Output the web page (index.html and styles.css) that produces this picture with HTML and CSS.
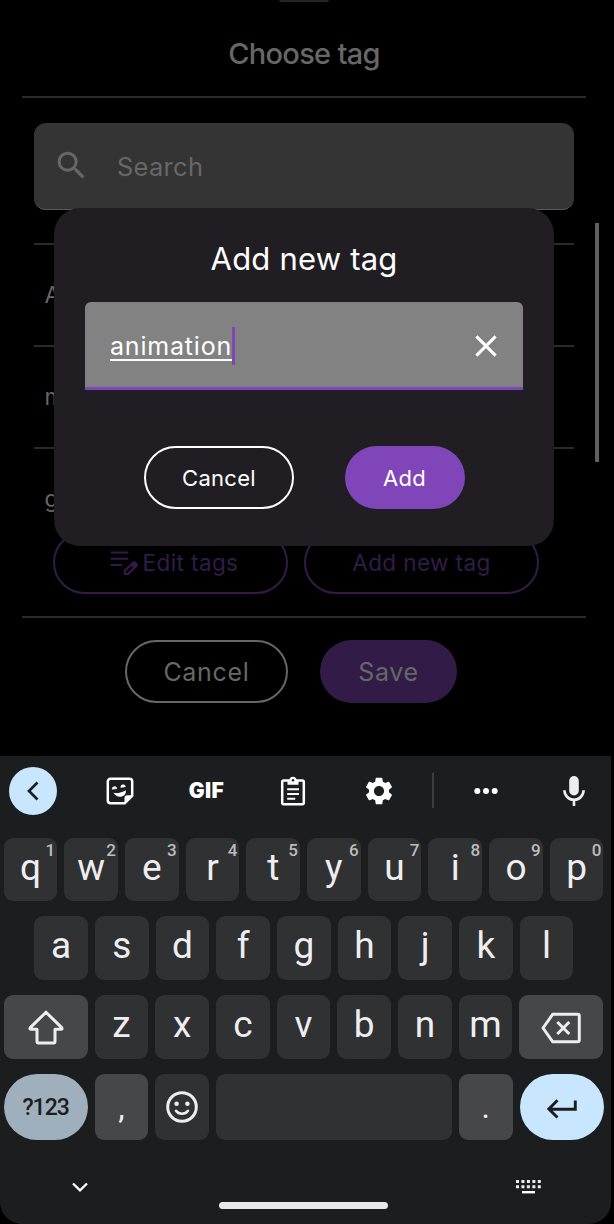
FILE: index.html
```html
<!DOCTYPE html>
<html lang="en">
<head>
<meta charset="utf-8">
<title>Choose tag</title>
<link rel="stylesheet" href="styles.css">
</head>
<body>
<div class="screen">
  <main class="sheet">
    <div class="handle"></div>
    <h1 class="sheet-title">Choose tag</h1>
    <div class="rule"></div>
    <div class="search">
      <svg class="search-icon" viewBox="0 0 24 24"><path fill="currentColor" d="M15.5 14h-.79l-.28-.27A6.47 6.47 0 0 0 16 9.5 6.5 6.5 0 1 0 9.5 16c1.61 0 3.09-.59 4.23-1.57l.27.28v.79l5 4.99L20.49 19l-4.99-5zm-6 0C7.01 14 5 11.99 5 9.5S7.01 5 9.5 5 14 7.01 14 9.5 11.99 14 9.5 14z"/></svg>
      <span class="search-text">Search</span>
    </div>
    <div class="list">
      <div class="row">A</div>
      <div class="row">m</div>
      <div class="row">g</div>
      <div class="scrollbar"></div>
    </div>
    <div class="tag-actions">
      <button class="pill tag-btn edit-btn"><svg class="edit-icon" viewBox="0 0 28 26" fill="none" stroke="currentColor" stroke-width="2.1" stroke-linecap="round"><path d="M1.5 2.5h16M1.5 8.7h16M1.5 15h10"/><path stroke-linejoin="round" d="M14.8 24v-3.2l8.3-8a1.6 1.6 0 0 1 2.2 0l1 1a1.6 1.6 0 0 1 0 2.2l-8.300 8z"/><path fill="currentColor" stroke="none" d="M20.700 15.200l3-3 3.600 3.600-3 3z"/></svg><span>Edit tags</span></button>
      <button class="pill tag-btn"><span>Add new tag</span></button>
    </div>
    <div class="rule"></div>
    <div class="sheet-actions">
      <button class="pill sheet-cancel">Cancel</button>
      <button class="pill sheet-save">Save</button>
    </div>
  </main>

  <section class="dialog">
    <h2 class="dialog-title">Add new tag</h2>
    <div class="field">
      <span class="field-text">animation</span><span class="caret"></span>
      <svg class="clear" viewBox="0 0 22 22"><path d="M1.400 1.400l19.200 19.200M20.600 1.400L1.400 20.600" stroke="#fff" stroke-width="3"/></svg>
    </div>
    <div class="dialog-actions">
      <button class="pill dialog-cancel">Cancel</button>
      <button class="pill dialog-add">Add</button>
    </div>
  </section>

  <section class="keyboard">
    <div class="toolbar">
      <div class="tool back"><svg width="12" height="20" viewBox="0 0 12 20"><path d="M10.500 1.500L2 10l8.500 8.500" fill="none" stroke="#1b1d1f" stroke-width="2.700"/></svg></div>
      <div class="tool t-sticker"><svg width="28" height="28" viewBox="0 0 28 28"><path d="M4.500 1.800h19a2.700 2.700 0 0 1 2.700 2.700v14.300l-7.400 7.400H4.500a2.700 2.700 0 0 1-2.700-2.700v-19a2.700 2.700 0 0 1 2.700-2.700z" fill="none" stroke="#fff" stroke-width="2.500"/><path d="M26.500 18.300h-5a3 3 0 0 0-3 3v5.200z" fill="#fff"/><path d="M7.300 15.800c4.500.8 8.600-.4 12.500-2.600.6 3.600-1.700 6.200-5 6.500-3.300.3-6-1.300-7.500-3.900z" fill="#fff"/><path d="M6.200 12.300a2.300 2.300 0 0 1 4.600-.7zM14.800 10.400a2.300 2.300 0 0 1 4.600-.7z" fill="#fff" stroke="#fff" stroke-width=".6"/></svg></div>
      <div class="tool t-gif">GIF</div>
      <div class="tool t-clip"><svg width="26" height="30" viewBox="0 0 26 30"><rect x="2.200" y="4.500" width="21.600" height="23.700" rx="1.500" fill="none" stroke="#fff" stroke-width="2.500"/><path d="M7.500 4.500h2A3.600 3.600 0 0 1 13 .8a3.600 3.600 0 0 1 3.500 3.700h2v4.300h-11z" fill="#fff"/><circle cx="13" cy="4.300" r="1.200" fill="#1b1d1f"/><path d="M7.200 13.200h11.800M7.200 18h11.800M7.200 22.800h8" stroke="#fff" stroke-width="2"/></svg></div>
      <div class="tool t-gear"><svg width="32" height="32" viewBox="0 0 24 24"><path fill="#fff" d="M19.430 12.980c.040-.320.070-.640.070-.980s-.030-.660-.070-.980l2.110-1.650c.190-.150.240-.420.120-.640l-2-3.460c-.120-.220-.390-.300-.610-.220l-2.490 1c-.520-.400-1.080-.730-1.690-.980l-.380-2.650A.488.488 0 0 0 14 2h-4c-.250 0-.460.180-.490.420l-.380 2.650c-.610.250-1.170.590-1.690.980l-2.490-1c-.230-.090-.490 0-.610.220l-2 3.460c-.130.220-.070.490.120.640l2.110 1.650c-.040.320-.070.650-.070.980s.030.660.070.980l-2.110 1.650c-.190.150-.240.420-.120.640l2 3.460c.120.220.390.300.610.220l2.490-1c.520.400 1.080.730 1.690.980l.380 2.650c.030.240.240.420.490.420h4c.250 0 .460-.180.490-.420l.380-2.650c.610-.250 1.170-.590 1.690-.980l2.490 1c.230.090.490 0 .610-.220l2-3.460c.120-.220.070-.490-.120-.640l-2.110-1.650zM12 15.800c-2.100 0-3.800-1.700-3.800-3.800s1.700-3.800 3.800-3.800 3.800 1.700 3.800 3.800-1.700 3.800-3.800 3.800z"/></svg></div>
      <div class="tool-divider"></div>
      <div class="tool t-more"><svg width="24" height="6" viewBox="0 0 24 6" fill="#fff"><circle cx="3.300" cy="3" r="3"/><circle cx="12" cy="3" r="3"/><circle cx="20.700" cy="3" r="3"/></svg></div>
      <div class="tool t-mic"><svg width="22" height="30" viewBox="0 0 22 30"><rect x="6.200" y="0" width="9.600" height="19.500" rx="4.800" fill="#eeeef0"/><path d="M1.400 14.200a9.600 9.600 0 0 0 19.200 0M11 24v6" fill="none" stroke="#eeeef0" stroke-width="2.600"/></svg></div>
    </div>

    <div class="keys keys-top">
      <div class="key">q<sup>1</sup></div><div class="key">w<sup>2</sup></div><div class="key">e<sup>3</sup></div><div class="key">r<sup>4</sup></div><div class="key">t<sup>5</sup></div><div class="key">y<sup>6</sup></div><div class="key">u<sup>7</sup></div><div class="key">i<sup>8</sup></div><div class="key">o<sup>9</sup></div><div class="key">p<sup>0</sup></div>
    </div>
    <div class="keys keys-home">
      <div class="key">a</div><div class="key">s</div><div class="key">d</div><div class="key">f</div><div class="key">g</div><div class="key">h</div><div class="key">j</div><div class="key">k</div><div class="key">l</div>
    </div>
    <div class="keys keys-low">
      <div class="key wide alt"><svg width="36" height="35" viewBox="0 0 36 35"><path d="M18 2.200L2.300 17.600c-.7.900-.3 1.700.700 1.700h6v12.200c0 .9.600 1.500 1.500 1.500h15c.9 0 1.500-.6 1.500-1.500V19.300h6c1 0 1.400-.8.700-1.700z" fill="none" stroke="#eeeef0" stroke-width="3" stroke-linejoin="round"/></svg></div>
      <div class="key">z</div><div class="key">x</div><div class="key">c</div><div class="key">v</div><div class="key">b</div><div class="key">n</div><div class="key">m</div>
      <div class="key wide alt erase"><svg width="40" height="32" viewBox="0 0 40 32" fill="none" stroke="#eeeef0" stroke-width="3"><path stroke-linejoin="round" d="M11.800 2.200h24.700a1.800 1.800 0 0 1 1.800 1.800v24a1.800 1.800 0 0 1-1.800 1.800H11.800L2 16z"/><path d="M16.300 10l12 12M28.300 10l-12 12"/></svg></div>
    </div>
    <div class="keys keys-space">
      <div class="key wide sym">?123</div>
      <div class="key alt punct comma">,</div>
      <div class="key"><svg width="32" height="32" viewBox="0 0 32 32"><circle cx="16" cy="16" r="14.300" fill="none" stroke="#eeeef0" stroke-width="3"/><circle cx="10.600" cy="12.800" r="2.300" fill="#eeeef0"/><circle cx="21.400" cy="12.800" r="2.300" fill="#eeeef0"/><path d="M10 19.800c2.800 4 9.200 4 12 0" fill="none" stroke="#eeeef0" stroke-width="2.600" stroke-linecap="round"/></svg></div>
      <div class="key space"></div>
      <div class="key alt punct">.</div>
      <div class="key wide enter"><svg width="30" height="20" viewBox="0 0 30 20" fill="none" stroke="#1b1d1f" stroke-width="2.900"><path d="M28.300 1.500v8.700H2.500M10.500 1.200L1.900 10l8.600 8.500"/></svg></div>
    </div>
    <div class="navbar">
      <svg class="nav-down" viewBox="0 0 16 10"><path d="M1 1.500l7 6.800 7-6.800" fill="none" stroke="#fff" stroke-width="2.300"/></svg>
      <div class="nav-pill"></div>
      <svg class="nav-kbd" viewBox="0 0 25 14"><path d="M0 1.500h25M0 6.700h25" stroke="#eee" stroke-width="3" stroke-dasharray="3 2.450"/><path d="M6 12.200h13" stroke="#fff" stroke-width="2.400"/></svg>
    </div>
  </section>
</div>
</body>
</html>
```
FILE: styles.css
```css
* { box-sizing: border-box; }
body { margin: 0; background: #000; }
h1, h2 { margin: 0; font-weight: 400; }
svg { display: block; flex: none; }

.screen {
  position: relative;
  width: 614px;
  height: 1224px;
  overflow: hidden;
  background: #000;
  font-family: Inter, Roboto, sans-serif;
  display: flex;
  flex-direction: column;
}

/* bottom sheet */
.sheet { width: 608px; height: 756px; padding: 0 22px; display: flex; flex-direction: column; flex: none; }
.handle { width: 50px; height: 2px; margin: 0 auto; background: #242424; border-radius: 0 0 2px 2px; flex: none; }
.sheet-title { height: 94px; padding-top: 10px; line-height: 84px; text-align: center; font-size: 29px; font-weight: 500; letter-spacing: -0.700px; color: #676767; }
.rule { height: 2px; background: #2b2b2b; flex: none; }
.search {
  height: 87px; margin: 25px 12.400px 0; flex: none;
  display: flex; align-items: center;
  border-radius: 12px; background: #343434;
  border-bottom: 1px solid #5a5a5a;
  color: #676767;
}
.search-icon { width: 37px; height: 37px; margin: 0 0 1px 18.500px; }
.search-text { margin-left: 27px; font-size: 25.500px; letter-spacing: 0.300px; }

.list { position: relative; height: 321px; margin: 0 12.400px; padding-top: 33px; overflow: visible; flex: none; }
.row { height: 102px; padding-left: 10px; border-top: 2px solid #2b2b2b; line-height: 101px; font-size: 23px; color: #676767; }
.scrollbar { position: absolute; right: -25.400px; top: 13px; width: 4px; height: 239px; background: #5f5f5f; }

.pill {
  margin: 0; padding: 0; height: 63px; border-radius: 32px;
  display: flex; align-items: center; justify-content: center;
  font-family: inherit; background: transparent; flex: none;
}
.tag-actions { display: flex; gap: 16px; padding-left: 31px; height: 85px; flex: none; }
.tag-btn { width: 235px; border: 2px solid #331b48; color: #331b48; font-size: 22.500px; letter-spacing: 0.400px; gap: 5px; }
.edit-btn { padding-left: 7px; }
.edit-icon { width: 28px; height: 26px; }
.sheet-actions { display: flex; gap: 32px; padding: 22px 0 0 103px; }
.sheet-cancel { width: 163px; border: 2px solid #676767; color: #676767; font-size: 25px; letter-spacing: 0.700px; }
.sheet-save { width: 137px; border: 0; background: #331b48; color: #676767; font-size: 25px; letter-spacing: 0.700px; }

/* dialog */
.dialog {
  position: absolute; left: 54px; top: 208px; width: 500px; height: 338px;
  padding: 0 31px; border-radius: 26px; background: #211e23; color: #fff;
}
.dialog-title { height: 94px; padding-top: 2px; line-height: 98px; text-align: center; font-size: 31px; letter-spacing: 0.200px; }
.field {
  height: 88px; padding: 0 26px 0 25px;
  display: flex; align-items: center;
  border-radius: 6px 6px 0 0; background: #828282; border-bottom: 3px solid #8045b8;
}
.field-text { height: 32px; line-height: 34px; margin-top: 1px; border-bottom: 2px solid #fff; font-size: 25px; letter-spacing: 0.800px; }
.caret { width: 3px; height: 38px; margin-top: 3px; background: #8045b8; }
.clear { width: 22px; height: 22px; margin: 3px 0 0 auto; }
.dialog-actions { display: flex; gap: 50.500px; padding: 56px 0 0 59px; }
.dialog-cancel { width: 150px; border: 2px solid #fff; color: #fff; font-size: 22px; letter-spacing: 0.300px; }
.dialog-add { width: 120px; border: 0; background: #8045b8; color: #fff; font-size: 22px; letter-spacing: 0.300px; }

/* keyboard */
.keyboard {
  width: 611px; height: 468px; padding-left: 3.600px; flex: none;
  border-radius: 0 0 22px 22px; background: #1b1d1f;
  display: flex; flex-direction: column; color: #eeeef0;
}
.toolbar { height: 82px; padding: 0 0 13px; display: flex; align-items: center; flex: none; }
.tool { display: flex; align-items: center; justify-content: center; flex: none; }
.back { width: 48px; height: 48px; margin-left: 5.400px; border-radius: 50%; background: #c8e6fd; }
.t-sticker { width: 28px; margin-left: 49px; }
.t-gif { width: 36px; margin-left: 54.500px; font-size: 21px; font-weight: 900; letter-spacing: 0.500px; color: #fff; }
.t-clip { width: 26px; margin-left: 55.500px; }
.t-gear { width: 32px; margin-left: 57px; }
.tool-divider { width: 1.500px; height: 35px; margin-left: 37.500px; background: #3c3e40; flex: none; }
.t-more { width: 24px; margin-left: 40.500px; }
.t-mic { width: 22px; margin-left: 65px; }

.keys { width: 600px; height: 64px; display: flex; gap: 7px; margin-bottom: 15px; flex: none; }
.keys-top { height: 63px; }
.keys-home { padding: 0 30.600px; }
.keys-space { height: 66px; margin: 0; }
.key {
  position: relative; width: 53.700px; border-radius: 9px; background: #303133; flex: none;
  display: flex; align-items: center; justify-content: center;
  font-family: Roboto, sans-serif; font-size: 37px; line-height: 1; padding-bottom: 5px;
}
.key svg { margin-top: 5px; }
.key sup { position: absolute; right: 2px; top: 3px; font-size: 17px; font-weight: 500; line-height: 18px; color: #bcbcbe; }
.alt { background: #464749; }
.wide { width: 84px; }
.sym { border-radius: 33px; background: #9fafbb; color: #1b1d1f; font-size: 23px; font-weight: 500; letter-spacing: -1px; padding-bottom: 0; }
.punct { font-size: 32px; padding: 0; }
.space { width: 235.900px; }
.erase svg { margin-top: 7px; }
.enter { border-radius: 33px; background: #c8e6fd; }
.enter svg { margin-top: 8px; }
.navbar { height: 84px; display: flex; align-items: flex-start; padding-left: 68.400px; }
.nav-down { width: 16px; height: 10px; margin-top: 41.500px; }
.nav-pill { width: 169px; height: 7px; margin: 62px 0 0 131px; border-radius: 4px; background: #e8e8e8; }
.nav-kbd { width: 25px; height: 14px; margin: 40px 0 0 128px; }
```
